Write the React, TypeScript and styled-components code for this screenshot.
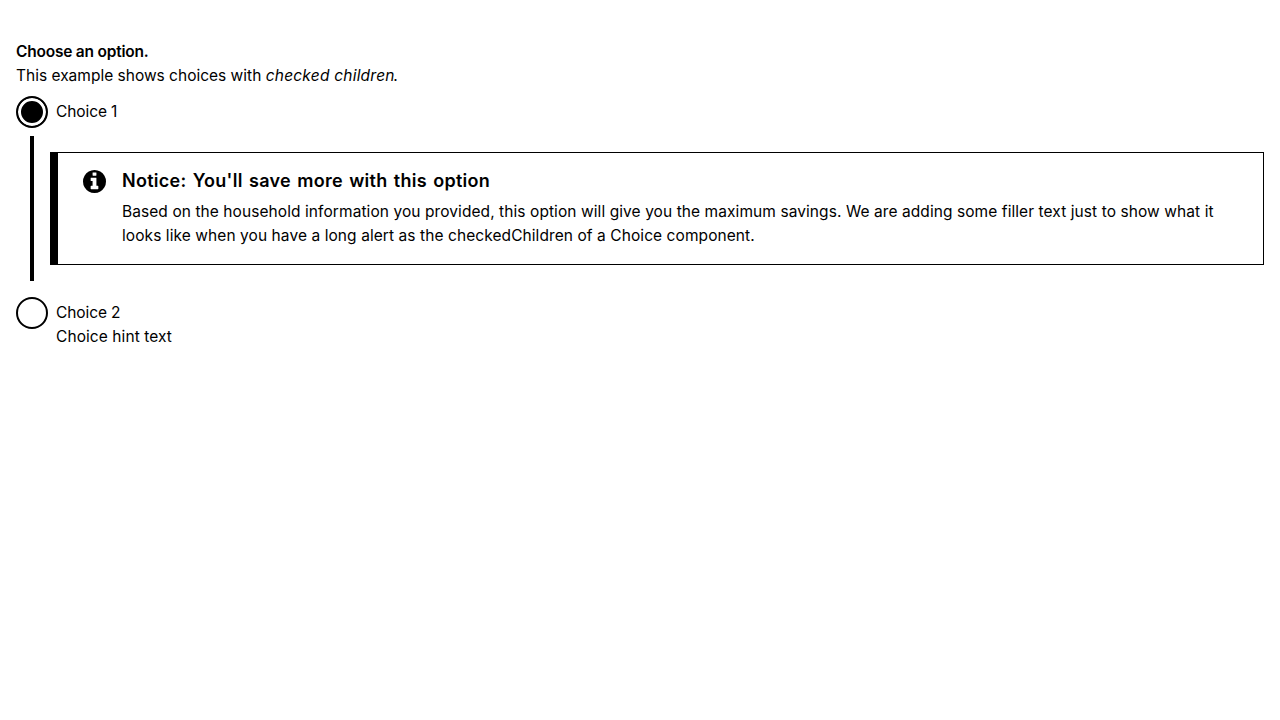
import React from 'react';
import styled, { createGlobalStyle } from 'styled-components';

const GlobalStyle = createGlobalStyle`
  *, *::before, *::after { box-sizing: border-box; }
  body { margin: 0; background: #fff; color: #000; font: 400 15.5px/24px Inter, "Liberation Sans", sans-serif; }
`;

const Page = styled.main`
  padding: 40px 16px 0;
`;

const Fieldset = styled.fieldset`
  border: 0;
  margin: 0;
  padding: 0;
  min-width: 0;
`;

const Legend = styled.legend`
  display: block;
  padding: 0;
  font-weight: 600;
  letter-spacing: -0.22px;
`;

const Hint = styled.p`
  margin: 0 0 8px;

  em {
    letter-spacing: 0.22px;
    margin-right: -1.5px;
  }
`;

const Choice = styled.label`
  display: flex;
  align-items: flex-start;
  gap: 8px;
`;

const Radio = styled.input`
  appearance: none;
  flex: none;
  width: 32px;
  height: 32px;
  margin: 0;
  border: 2px solid #000;
  border-radius: 50%;
  background: #fff;
  &:checked {
    background: #000;
    box-shadow: inset 0 0 0 3px #fff;
  }
`;

const ChoiceText = styled.span`
  padding-top: 4px;
  letter-spacing: -0.1px;
`;

const ChoiceHint = styled.span`
  display: block;
  letter-spacing: 0.08px;
`;

const CheckedChildren = styled.div`
  margin: 8px 0 16px 14px;
  padding: 16px 0 16px 16px;
  border-left: 4px solid #000;
`;

const Alert = styled.section`
  display: flex;
  gap: 16px;
  border: 1px solid #000;
  border-left-width: 8px;
  padding: 16px 16px 16px 24px;
`;

const InfoIcon = styled.svg`
  flex: none;
  width: 23px;
  height: 23px;
  margin: 1px 0 0 1px;
`;

const AlertBody = styled.div`
  flex: 1;
`;

const AlertHeading = styled.h2`
  margin: 0 0 8px;
  font: 600 18px/23px Inter, "Liberation Sans", sans-serif;
  letter-spacing: 0.27px;
  word-spacing: 1.5px;
`;

const AlertText = styled.p`
  margin: 0;
  letter-spacing: 0.077px;
`;

export default function App() {
  return (
    <>
      <GlobalStyle />
      <Page>
        <Fieldset>
          <Legend>Choose an option.</Legend>
          <Hint>
            This example shows choices with <em>checked children</em>.
          </Hint>
          <Choice>
            <Radio type="radio" name="choice" defaultChecked />
            <ChoiceText>Choice 1</ChoiceText>
          </Choice>
          <CheckedChildren>
            <Alert>
              <InfoIcon viewBox="128 128 1536 1536" aria-hidden="true">
                <path d="M1152 1376v-160q0-14-9-23t-23-9h-96v-512q0-14-9-23t-23-9h-320q-14 0-23 9t-9 23v160q0 14 9 23t23 9h96v320h-96q-14 0-23 9t-9 23v160q0 14 9 23t23 9h448q14 0 23-9t9-23zm-128-896v-160q0-14-9-23t-23-9h-192q-14 0-23 9t-9 23v160q0 14 9 23t23 9h192q14 0 23-9t9-23zm640 416q0 209-103 385.5t-279.5 279.5-385.5 103-385.5-103-279.5-279.5-103-385.5 103-385.5 279.5-279.5 385.5-103 385.5 103 279.5 279.5 103 385.5z" />
              </InfoIcon>
              <AlertBody>
                <AlertHeading>Notice: You'll save more with this option</AlertHeading>
                <AlertText>
                  Based on the household information you provided, this option will give you the maximum savings. We are
                  adding some filler text just to show what it looks like when you have a long alert as the
                  checkedChildren of a Choice component.
                </AlertText>
              </AlertBody>
            </Alert>
          </CheckedChildren>
          <Choice>
            <Radio type="radio" name="choice" />
            <ChoiceText>
              Choice 2<ChoiceHint>Choice hint text</ChoiceHint>
            </ChoiceText>
          </Choice>
        </Fieldset>
      </Page>
    </>
  );
}
